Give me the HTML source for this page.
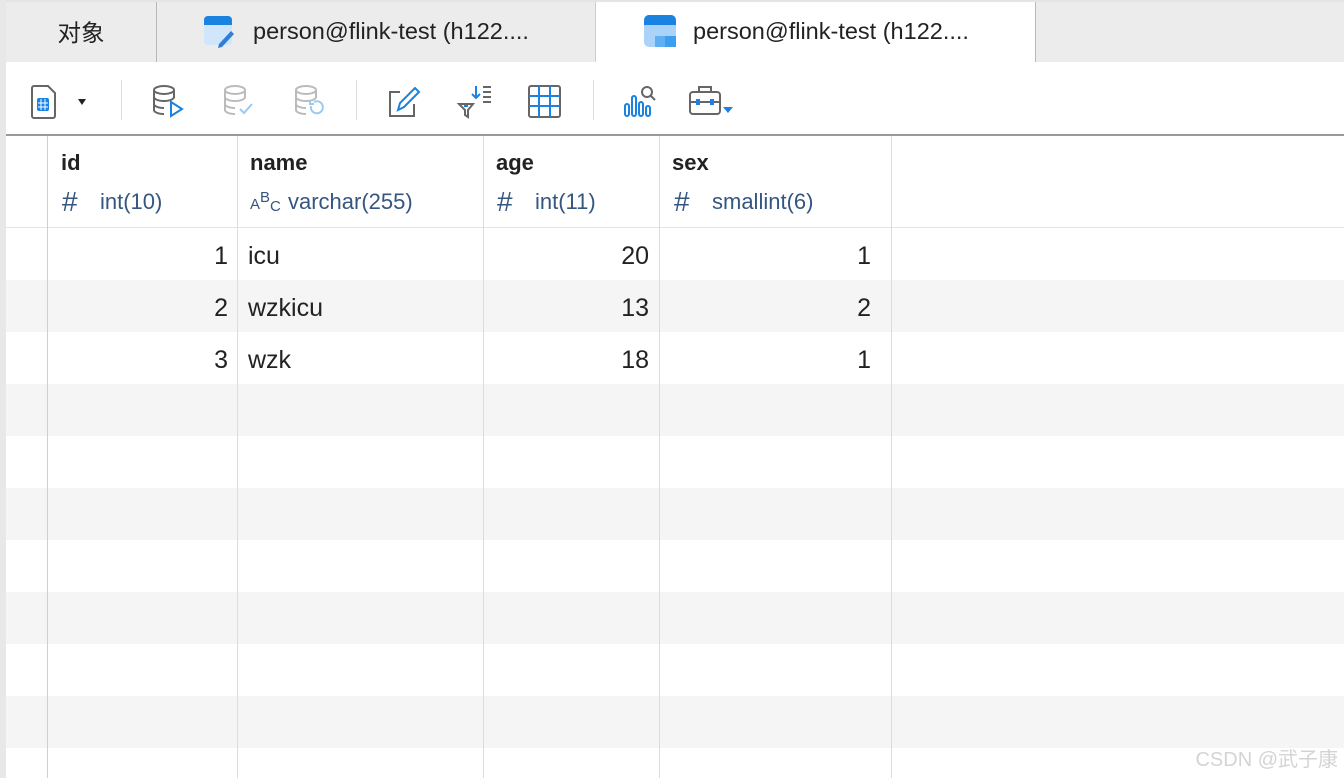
<!DOCTYPE html>
<html><head><meta charset="utf-8"><style>
*{margin:0;padding:0;box-sizing:border-box}
body{width:1344px;height:778px;overflow:hidden;background:#fff;font-family:"Liberation Sans","Noto Sans CJK SC",sans-serif;position:relative}
.abs{position:absolute}
.tabs{left:0;top:0;width:1344px;height:62px;background:#ececec;border-top:2px solid #e4e4e4}
.tab{position:absolute;top:0;height:62px;font-size:23.5px;color:#222;display:flex;align-items:center}
.lstrip{left:0;top:0;width:6px;height:778px;background:#e8e8e8}
.vl{position:absolute;top:136px;width:1px;height:642px;background:#dcdcdc}
.row{position:absolute;left:6px;width:1338px;height:52px}
.cell{position:absolute;font-size:25px;color:#222;top:12px}
.h1{position:absolute;top:150px;font-size:22px;font-weight:bold;color:#222}
.h2{position:absolute;top:188px;height:28px;line-height:28px;font-size:22px;color:#34567f;white-space:nowrap}
.hs{display:inline-block;font-size:28px;line-height:28px;vertical-align:top;width:38px;font-weight:300}
.abc{display:inline-block;width:38px;font-size:15px;vertical-align:top;position:relative;top:3px}
</style></head><body>
<div class="abs tabs"></div>
<div class="tab" style="left:6px;width:150px;justify-content:center">对象</div>
<div class="abs" style="left:156px;top:2px;width:1px;height:60px;background:#b8b8b8"></div>
<div class="tab" style="left:203px">
<svg width="32" height="34" viewBox="0 0 32 34"><rect x="1" y="2" width="28" height="29" rx="4" fill="#cfe6fb"/><rect x="1" y="2" width="28" height="9" rx="4" fill="#1a82e0"/><rect x="1" y="8" width="28" height="3" fill="#1a82e0"/><path d="M16 30 L28 17 L31 20 L19 33 L15 34Z" fill="#2f7fd6"/></svg>
<span style="margin-left:18px">person@flink-test (h122....</span></div>
<div class="abs" style="left:595px;top:2px;width:441px;height:60px;background:#fff;border-left:1px solid #ccc;border-right:1px solid #b8b8b8"></div>
<div class="tab" style="left:643px">
<svg width="34" height="34" viewBox="0 0 34 34"><rect x="1" y="1" width="32" height="32" rx="5" fill="#a9d3f8"/><rect x="1" y="1" width="32" height="10" rx="5" fill="#1a82e0"/><rect x="1" y="7" width="32" height="4" fill="#1a82e0"/><rect x="12" y="22" width="10" height="11" fill="#60aef3"/><rect x="22" y="22" width="11" height="11" fill="#3d9ef0"/></svg>
<span style="margin-left:16px">person@flink-test (h122....</span></div>
<div class="abs" style="left:0;top:62px;width:1344px;height:73px;background:#fff"></div>
<div class="abs" style="left:0;top:134px;width:1344px;height:2px;background:#9a9a9a"></div>
<svg class="abs" style="left:28px;top:84px" width="70" height="36" viewBox="0 0 70 36"><path d="M6 2h14l7 7v23a2 2 0 0 1-2 2H6a2 2 0 0 1-2-2V4a2 2 0 0 1 2-2z" fill="none" stroke="#666" stroke-width="2"/><rect x="9" y="14" width="12" height="13" rx="2" fill="#1a82e0"/><path d="M10 19h10M10 23h10M13 15v11M17 15v11" stroke="#fff" stroke-width="1"/><path d="M50 15h8l-4 6z" fill="#222"/></svg>
<div class="abs" style="left:121px;top:80px;width:1px;height:40px;background:#ddd"></div>
<svg class="abs" style="left:150px;top:84px" width="36" height="36" viewBox="0 0 36 36"><ellipse cx="14" cy="6" rx="10" ry="4" fill="none" stroke="#666" stroke-width="2"/><path d="M4 6v20c0 2 4 4 10 4M24 6v8M4 13c0 2 4 4 10 4s10-2 10-4M4 20c0 2 4 4 10 4" fill="none" stroke="#666" stroke-width="2"/><path d="M21 18v14l11-7z" fill="none" stroke="#1a82e0" stroke-width="2"/></svg>
<svg class="abs" style="left:221px;top:84px" width="36" height="36" viewBox="0 0 36 36"><ellipse cx="14" cy="6" rx="10" ry="4" fill="none" stroke="#bbb" stroke-width="2"/><path d="M4 6v20c0 2 4 4 10 4M24 6v8M4 13c0 2 4 4 10 4s10-2 10-4M4 20c0 2 4 4 10 4" fill="none" stroke="#bbb" stroke-width="2"/><path d="M19 25l4 4 8-9" fill="none" stroke="#9cc9f0" stroke-width="2"/></svg>
<svg class="abs" style="left:292px;top:84px" width="36" height="36" viewBox="0 0 36 36"><ellipse cx="14" cy="6" rx="10" ry="4" fill="none" stroke="#bbb" stroke-width="2"/><path d="M4 6v20c0 2 4 4 10 4M24 6v8M4 13c0 2 4 4 10 4s10-2 10-4M4 20c0 2 4 4 10 4" fill="none" stroke="#bbb" stroke-width="2"/><path d="M19 22a6 6 0 1 0 3-4M18 16v4h4" fill="none" stroke="#9cc9f0" stroke-width="2"/></svg>
<div class="abs" style="left:356px;top:80px;width:1px;height:40px;background:#ddd"></div>
<svg class="abs" style="left:386px;top:84px" width="36" height="36" viewBox="0 0 36 36"><path d="M14 8H4v24h24V20" fill="none" stroke="#666" stroke-width="2"/><path d="M12 26l2-7L29 4l4 4-15 15z" fill="none" stroke="#1a82e0" stroke-width="2"/></svg>
<svg class="abs" style="left:456px;top:84px" width="36" height="36" viewBox="0 0 36 36"><path d="M3 20h14l-5 6v7l-3-2v-5z" fill="none" stroke="#666" stroke-width="2"/><path d="M20 2v12M16 10l4 4 4-4" fill="none" stroke="#1a82e0" stroke-width="2"/><path d="M27 3h8M27 8h8M27 13h8M27 18h8" stroke="#666" stroke-width="2"/><path d="M8 22h4" stroke="#1a82e0" stroke-width="2"/></svg>
<svg class="abs" style="left:527px;top:84px" width="36" height="36" viewBox="0 0 36 36"><rect x="2" y="2" width="31" height="31" rx="2" fill="none" stroke="#666" stroke-width="2"/><path d="M2 12h31M2 22h31M12 2v31M23 2v31" stroke="#1a82e0" stroke-width="2"/></svg>
<div class="abs" style="left:593px;top:80px;width:1px;height:40px;background:#ddd"></div>
<svg class="abs" style="left:622px;top:84px" width="36" height="36" viewBox="0 0 36 36"><rect x="3" y="20" width="4" height="12" rx="2" fill="none" stroke="#1a82e0" stroke-width="2"/><rect x="10" y="12" width="4" height="20" rx="2" fill="none" stroke="#1a82e0" stroke-width="2"/><rect x="17" y="18" width="4" height="14" rx="2" fill="none" stroke="#1a82e0" stroke-width="2"/><rect x="24" y="22" width="4" height="10" rx="2" fill="none" stroke="#1a82e0" stroke-width="2"/><circle cx="25" cy="8" r="5" fill="none" stroke="#666" stroke-width="2"/><path d="M29 12l4 4" stroke="#666" stroke-width="2"/></svg>
<svg class="abs" style="left:688px;top:84px" width="48" height="36" viewBox="0 0 48 36"><rect x="2" y="8" width="30" height="22" rx="3" fill="none" stroke="#666" stroke-width="2"/><path d="M11 8V3h12v5M2 18h30" fill="none" stroke="#666" stroke-width="2"/><rect x="8" y="15" width="4" height="6" fill="#1a82e0"/><rect x="22" y="15" width="4" height="6" fill="#1a82e0"/><path d="M35 23h10l-5 6z" fill="#1a82e0"/></svg>
<div class="abs lstrip"></div>
<div class="row" style="top:280px;background:#f5f5f5"></div>
<div class="row" style="top:384px;background:#f5f5f5"></div>
<div class="row" style="top:488px;background:#f5f5f5"></div>
<div class="row" style="top:592px;background:#f5f5f5"></div>
<div class="row" style="top:696px;background:#f5f5f5"></div>
<div class="abs" style="left:6px;top:227px;width:1338px;height:1px;background:#e4e4e4"></div>
<div class="vl" style="left:47px;background:#cfcfcf"></div>
<div class="vl" style="left:237px"></div>
<div class="vl" style="left:483px"></div>
<div class="vl" style="left:659px"></div>
<div class="vl" style="left:891px"></div>
<div class="h1" style="left:61px">id</div>
<div class="h1" style="left:250px">name</div>
<div class="h1" style="left:496px">age</div>
<div class="h1" style="left:672px">sex</div>
<div class="h2" style="left:62px"><span class="hs">#</span>int(10)</div>
<div class="h2" style="left:250px"><span class="abc">A<span style="position:relative;top:-7px">B</span><span style="position:relative;top:2px">C</span></span>varchar(255)</div>
<div class="h2" style="left:497px"><span class="hs">#</span>int(11)</div>
<div class="h2" style="left:674px"><span class="hs">#</span>smallint(6)</div>
<div class="cell" style="top:242px;right:1116px">1</div><div class="cell" style="top:242px;left:248px">icu</div><div class="cell" style="top:242px;right:695px">20</div><div class="cell" style="top:242px;right:473px">1</div>
<div class="cell" style="top:294px;right:1116px">2</div><div class="cell" style="top:294px;left:248px">wzkicu</div><div class="cell" style="top:294px;right:695px">13</div><div class="cell" style="top:294px;right:473px">2</div>
<div class="cell" style="top:346px;right:1116px">3</div><div class="cell" style="top:346px;left:248px">wzk</div><div class="cell" style="top:346px;right:695px">18</div><div class="cell" style="top:346px;right:473px">1</div>
<div class="abs" style="right:6px;top:743px;font-size:20px;color:#d4d4d4">CSDN @武子康</div>
</body></html>
